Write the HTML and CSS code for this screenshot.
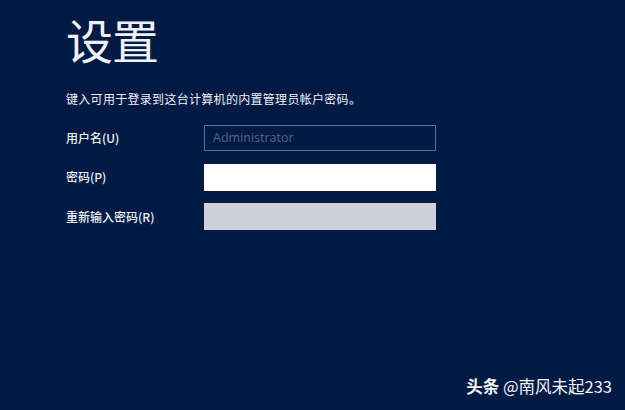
FILE: index.html
```html
<!DOCTYPE html>
<html lang="zh-CN">
<head>
  <meta charset="UTF-8">
  <title>设置</title>
  <link rel="stylesheet" href="styles.css">
</head>
<body>
  <div class="setup">
    <h1>设置</h1>
    <p class="intro">键入可用于登录到这台计算机的内置管理员帐户密码。</p>

    <form class="fields">
      <!-- user name -->
      <label for="user">用户名(U)</label>
      <input type="text" id="user" class="readonly" placeholder="Administrator" readonly>

      <!-- password -->
      <label for="pwd">密码(P)</label>
      <input type="password" id="pwd" class="active">

      <!-- confirm -->
      <label for="pwd2">重新输入密码(R)</label>
      <input type="password" id="pwd2" class="disabled">
    </form>
  </div>

  <div class="mark"><b>头条</b> @南风未起233</div>
</body>
</html>
```

FILE: styles.css
```css
html, body {
  height: 100%;
}
body {
  margin: 0;
  background: #031a44;
  color: #eef1f6;
  font-family: "Noto Sans CJK SC", "Noto Sans", sans-serif;
  position: relative;
  overflow: hidden;
}
.setup {
  padding: 12px 0 0 66px;
}
h1 {
  margin: 0;
  font-size: 47px;
  font-weight: 400;
  line-height: 54px;
  letter-spacing: -1px;
}
.intro {
  margin: 25px 0 0;
  font-size: 12px;
  line-height: 16px;
  letter-spacing: 0.3px;
}
.fields {
  margin-top: 17px;
  display: grid;
  grid-template-columns: 138px 232px;
  grid-auto-rows: 27px;
  row-gap: 12.5px;
  align-items: center;
}
label {
  font-size: 12px;
  line-height: 16px;
  font-weight: 500;
}
input {
  box-sizing: border-box;
  height: 27px;
  width: 232px;
  margin: 0;
  border: none;
  padding: 0 8px;
  font-family: "Open Sans", "Noto Sans", sans-serif;
  font-size: 12.5px;
  outline: none;
}
.readonly {
  height: 26px;
  background: #031a44;
  border: 1.5px solid #5d6e8e;
}
.readonly::placeholder {
  color: #56668a;
}
.active {
  background: #ffffff;
}
.disabled {
  background: #cdd1da;
}
.mark {
  position: absolute;
  right: 13px;
  bottom: 12px;
  font-size: 16.5px;
  color: #f4f5f8;
}
.mark b {
  font-weight: 700;
}
```
